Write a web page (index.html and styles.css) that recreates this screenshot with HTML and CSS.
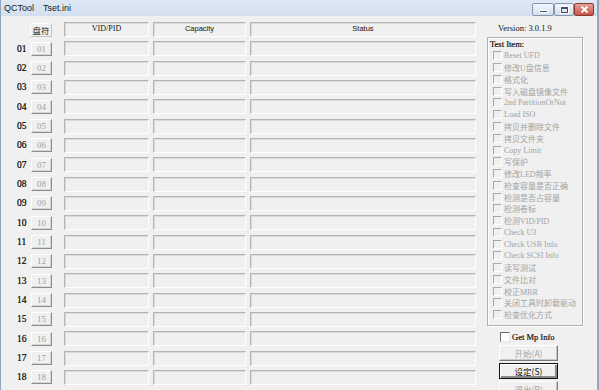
FILE: index.html
```html
<!DOCTYPE html>
<html lang="zh-CN">
<head>
    <meta charset="UTF-8">
    <title>QCTool</title>
    <link rel="stylesheet" href="styles.css">
</head>
<body>
    <div class="window">
        <div class="titlebar">
            <span class="title">QCTool</span>
            <span class="title file">Tset.ini</span>
            <div class="caption">
                <span class="cap-btn min"><i></i></span>
                <span class="cap-btn max"><i></i></span>
                <span class="cap-btn close">
                    <svg width="9" height="7" viewBox="0 0 9 7"><path d="M1.5 0.5 L7.5 6.5 M7.5 0.5 L1.5 6.5" stroke="#fff" stroke-width="1.8"/></svg>
                </span>
            </div>
        </div>

        <div class="client">
            <div class="ports" id="ports">
                <div class="lbl"></div>
                <div class="hdr-drive">盘符</div>
                <div class="box hdr serif">VID/PID</div>
                <div class="box hdr sans">Capacity</div>
                <div class="box hdr sans status">Status</div>
            </div>

            <div class="side">
                <div class="version">Version: 3.0.1.9</div>
                <div class="group">
                    <div class="group-title">Test Item:</div>
                    <ul class="items" id="items"></ul>
                </div>
                <label class="mp"><span class="chk on"></span>Get Mp Info</label>
                <div class="btn disabled">开始(A)</div>
                <div class="btn default">设定(S)</div>
                <div class="btn disabled">退出(R)</div>
            </div>
        </div>
    </div>

    <script>
        const ports = document.getElementById("ports");
        for (let i = 1; i <= 18; i++) {
            const n = String(i).padStart(2, "0");
            ports.insertAdjacentHTML("beforeend",
                '<div class="lbl">' + n + '</div>' +
                '<div class="port-btn">' + n + '</div>' +
                '<div class="box"></div><div class="box"></div><div class="box status"></div>');
        }

        const tests = ["Reset UFD", "修改U盘信息", "格式化", "写入磁盘镜像文件", "2nd PartitionOrNot",
            "Load ISO", "拷贝并删除文件", "拷贝文件夹", "Copy Limit", "写保护", "修改LED频率",
            "检查容量是否正确", "检测是否占容量", "检测卷标", "检测VID/PID", "Check U3",
            "Check USB Info", "Check SCSI Info", "读写测试", "文件比对", "校正MBR",
            "关闭工具时卸载驱动", "检查优化方式"];
        const items = document.getElementById("items");
        tests.forEach(function (t) {
            items.insertAdjacentHTML("beforeend", '<li><span class="chk"></span>' + t + '</li>');
        });
    </script>
</body>
</html>
```

FILE: styles.css
```css
body {
    margin: 0;
    padding: 0;
    width: 599px;
    height: 390px;
    overflow: hidden;
    background-color: #f0f0f0;
    font-family: "Liberation Serif", "Noto Sans CJK SC", serif;
    font-size: 9px;
}

.window {
    width: 599px;
    height: 390px;
    box-sizing: border-box;
    border-left: 1px solid #93a6bd;
    border-right: 2px solid #93a6bd;
    display: flex;
    flex-direction: column;
}

.titlebar {
    height: 17px;
    background: linear-gradient(#dfe9f5, #d2dfee);
    display: flex;
    align-items: center;
    padding-left: 3px;
    font-family: "Liberation Sans", "Noto Sans CJK SC", sans-serif;
    font-size: 9px;
    color: #1a1a1a;
}

.title.file {
    margin-left: 9px;
}

.caption {
    margin-left: auto;
    margin-right: 3px;
    display: flex;
    align-self: flex-start;
    margin-top: 3px;
}

.cap-btn {
    height: 11px;
    border: 1px solid #8597b0;
    background: linear-gradient(#f2f6fb, #d2deec);
    display: flex;
    align-items: center;
    justify-content: center;
    border-radius: 2px;
}

.cap-btn.min { width: 20px; }
.cap-btn.max { width: 18px; }
.cap-btn.close {
    width: 18px;
    background: linear-gradient(#e5a197, #c75444);
    border-color: #8a3a32;
}

.cap-btn.min i {
    width: 7px;
    height: 1px;
    margin-top: 4px;
    background: #3d4f66;
    border: 1px solid #fff;
}

.cap-btn.max i {
    width: 5px;
    height: 3px;
    border: 1px solid #3d4f66;
    border-top-width: 2px;
    outline: 1px solid #fff;
}

.client {
    flex: 1;
    display: flex;
    padding-top: 6px;
}

.ports {
    display: grid;
    grid-template-columns: 30px 33px 89px 97px 226px;
    grid-auto-rows: 15px;
    row-gap: 4.33px;
    align-items: center;
}

.lbl {
    padding-left: 16px;
    color: #000;
    font-size: 9.5px;
    -webkit-text-stroke: 0.2px #000;
}

.port-btn, .hdr-drive {
    width: 21px;
    height: 14px;
    box-sizing: border-box;
    border: 1px solid;
    border-color: #fff #8c8c8c #8c8c8c #fff;
    box-shadow: inset -1px -1px 0 #d6d6d6;
    font-size: 9px;
    line-height: 12px;
    text-align: center;
    color: #a0a0a0;
}

.hdr-drive {
    margin-left: -1px;
    width: 22px;
    white-space: nowrap;
    font-family: "Noto Sans CJK SC", sans-serif;
    font-size: 8.5px;
    color: #222;
    border-color: #fdfdfd #c4c4c4 #c4c4c4 #fdfdfd;
    box-shadow: none;
}

.box {
    width: 85px;
    height: 15px;
    box-sizing: border-box;
    border: 1px solid;
    border-color: #b4b4b4 #fff #fff #b4b4b4;
    box-shadow: inset 1px 1px 0 #dadada;
}

.ports .box:nth-child(5n+4) { width: 93px; }
.box.status { width: 226px; }

.box.hdr {
    text-align: center;
    line-height: 12px;
    color: #111;
}

.serif { font-family: "Liberation Serif", serif; font-size: 8px; }
.sans { font-family: "Liberation Sans", sans-serif; font-size: 7.5px; }

.side {
    margin-left: 11px;
    width: 96px;
    display: flex;
    flex-direction: column;
}

.version {
    height: 12px;
    line-height: 12px;
    margin-left: 11px;
    color: #111;
    font-size: 8.5px;
}

.group {
    margin-top: 3px;
    height: 289px;
    box-sizing: border-box;
    border: 1px solid #b0b0b0;
    box-shadow: inset 1px 1px 0 #fff, 1px 1px 0 #fff;
    padding: 1px 0 0 2px;
}

.group-title {
    color: #111;
    font-size: 8.5px;
    line-height: 11px;
    -webkit-text-stroke: 0.2px #111;
}

.items {
    list-style: none;
    margin: 0;
    padding: 0;
}

.items li {
    height: 11.77px;
    display: flex;
    align-items: center;
    color: #a3a3a3;
    font-size: 8px;
    white-space: nowrap;
    padding-left: 3px;
}

.chk {
    width: 9px;
    height: 9px;
    box-sizing: border-box;
    border: 1px solid;
    border-color: #a8a8a8 #fff #fff #a8a8a8;
    margin-right: 2px;
    flex: none;
}

.mp {
    display: flex;
    align-items: center;
    margin-top: 5px;
    margin-left: 13px;
    height: 12px;
    color: #111;
    font-size: 8.5px;
    -webkit-text-stroke: 0.2px #111;
}

.chk.on {
    width: 10px;
    height: 10px;
    background: #fff;
    border-color: #6a6a6a #e8e8e8 #e8e8e8 #6a6a6a;
    margin-right: 2px;
}

.btn {
    margin-left: 12px;
    margin-top: 2px;
    width: 59px;
    height: 16px;
    box-sizing: border-box;
    border: 1px solid;
    border-color: #fff #7a7a7a #7a7a7a #fff;
    box-shadow: inset -1px -1px 0 #c8c8c8;
    text-align: center;
    line-height: 14px;
    font-family: "Noto Sans CJK SC", sans-serif;
    font-size: 8.5px;
}

.btn.disabled {
    color: #a6a6a6;
}

.btn.default {
    border: 1px solid #111;
    box-shadow: inset 1px 1px 0 #fff, inset -2px -2px 0 #8a8a8a;
    color: #111;
}
```
